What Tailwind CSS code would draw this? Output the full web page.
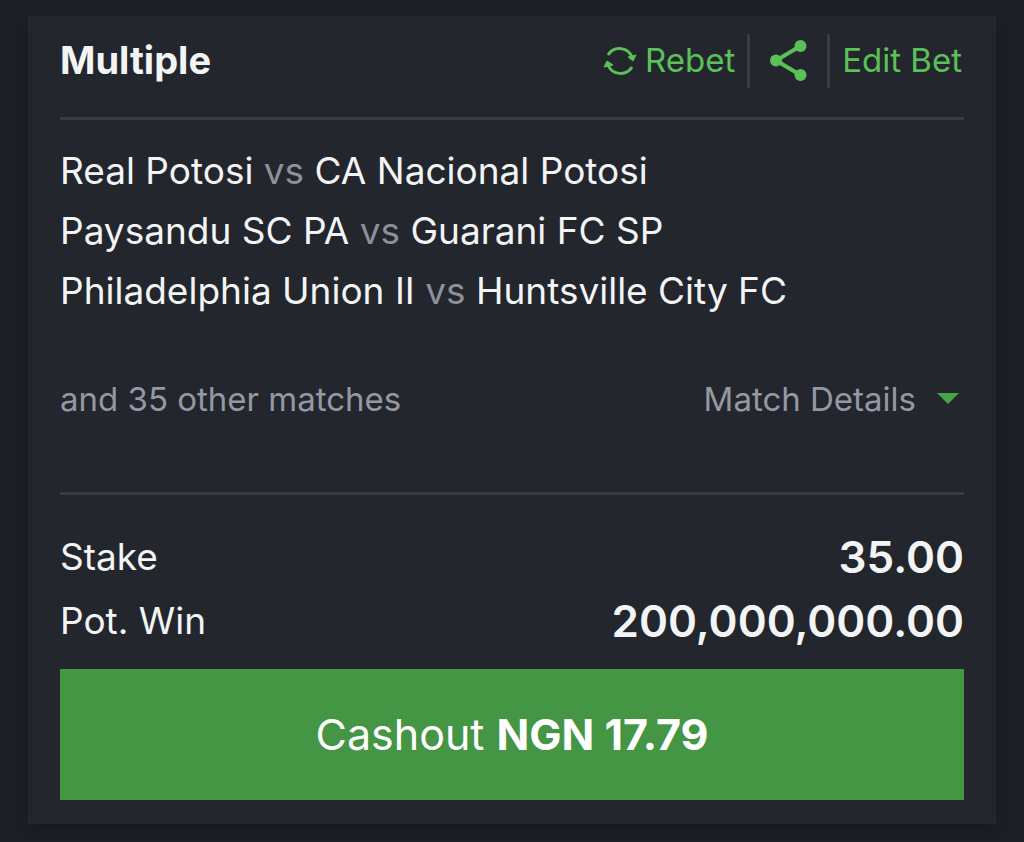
<!DOCTYPE html>
<html lang="en">
<head>
    <meta charset="UTF-8">
    <meta name="viewport" content="width=device-width, initial-scale=1.0">
    <title>Bet Slip</title>
    <script src="https://cdn.jsdelivr.net/npm/@tailwindcss/browser@4"></script>
</head>
<body class="bg-[#1b1e23] px-7 py-4 font-['Inter',sans-serif] text-[#f3f4f6]">
    <main class="bg-[#23262d] px-8 pt-4 pb-6 shadow-lg">
        <!-- Header -->
        <header class="flex items-center justify-between border-b-3 border-[#393c46] pb-7">
            <h1 class="text-[38px] leading-[57px] font-bold">Multiple</h1>
            <div class="flex items-center pr-0.5 text-[33px] text-[#5cc058]">
                <button class="flex items-center gap-2 pr-3">
                    <svg class="h-8 w-[34px]" viewBox="0 0 34 32" fill="none" stroke="currentColor" stroke-width="3">
                        <path d="M5 10A13.5 13.5 0 0 1 29 12M29 22A13.5 13.5 0 0 1 5 20"/>
                        <path d="M25 12l8-2-3 6zM1 22l3-6 6 4z" fill="currentColor" stroke-width="1" stroke-linejoin="round"/>
                    </svg>
                    Rebet
                </button>
                <button aria-label="Share" class="h-[54px] border-x-3 border-[#393c46] px-5">
                    <svg class="h-[41px] w-[37px]" viewBox="0 0 37 41" fill="currentColor">
                        <path d="M30.5 6L6 20.5 30.5 35" fill="none" stroke="currentColor" stroke-width="4"/>
                        <circle cx="30.5" cy="6" r="6"/><circle cx="6" cy="20.5" r="6"/><circle cx="30.5" cy="35" r="6"/>
                    </svg>
                </button>
                <button class="pl-3">Edit Bet</button>
            </div>
        </header>

        <!-- Matches -->
        <ul class="pt-[21px] text-[37px] leading-[60px]">
            <li>Real Potosi <span class="text-[#8d909b]">vs</span> CA Nacional Potosi</li>
            <li>Paysandu SC PA <span class="text-[#8d909b]">vs</span> Guarani FC SP</li>
            <li>Philadelphia Union II <span class="text-[#8d909b]">vs</span> Huntsville City FC</li>
        </ul>
        <div class="flex items-center justify-between border-b-3 border-[#393c46] pt-12 pb-[63px] text-[33px] leading-[60px] text-[#9598a3]">
            <p>and 35 other matches</p>
            <button class="flex items-center gap-5 pr-1">
                Match Details
                <svg class="h-3 w-6" viewBox="0 0 24 12" fill="#46a547"><path d="M1 0h22L12 11z"/></svg>
            </button>
        </div>

        <!-- Totals -->
        <dl class="pt-[30px] pb-4 leading-[64px]">
            <div class="flex items-center justify-between">
                <dt class="text-[37px]">Stake</dt>
                <dd class="text-[44px] font-semibold">35.00</dd>
            </div>
            <div class="flex items-center justify-between">
                <dt class="text-[37px]">Pot. Win</dt>
                <dd class="text-[44px] font-semibold">200,000,000.00</dd>
            </div>
        </dl>
        <button class="w-full bg-[#449544] py-8 text-[43px] leading-[67px] text-white">Cashout <b>NGN 17.79</b></button>
    </main>
</body>
</html>
